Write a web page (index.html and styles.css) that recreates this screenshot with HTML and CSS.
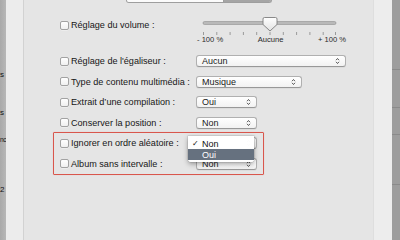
FILE: index.html
```html
<!DOCTYPE html>
<html lang="fr">
<head>
<meta charset="utf-8">
<title>Options</title>
<link rel="stylesheet" href="styles.css">
</head>
<body>
<div class="screen">
  <div class="side-left">
    <div class="frag f1">s</div>
    <div class="frag f2">s</div>
    <div class="frag f3">nc</div>
    <div class="frag f4">2</div>
  </div>
  <div class="gutter-left"></div>
  <div class="panel">
    <div class="tabs"><div class="tab on"></div><div class="tab"></div></div>

    <div class="volume">
      <label class="opt"><span class="cb"></span>Réglage du volume :</label>
      <div class="slider">
        <svg class="slider-svg" width="150" height="21" viewBox="0 0 150 21">
          <defs>
            <linearGradient id="kg" x1="0" y1="0" x2="0" y2="1">
              <stop offset="0" stop-color="#ffffff"/>
              <stop offset="1" stop-color="#e2e2e2"/>
            </linearGradient>
          </defs>
          <rect x="7" y="6.5" width="133" height="3" rx="1.5" fill="#b9b9b9" stroke="#8f8f8f" stroke-width="0.6"/>
          <g stroke="#9a9a9a" stroke-width="1">
            <line x1="7.5" y1="17" x2="7.5" y2="20"/>
            <line x1="20.8" y1="17" x2="20.8" y2="20"/>
            <line x1="34.1" y1="17" x2="34.1" y2="20"/>
            <line x1="47.4" y1="17" x2="47.4" y2="20"/>
            <line x1="60.7" y1="17" x2="60.7" y2="20"/>
            <line x1="74" y1="17" x2="74" y2="20"/>
            <line x1="87.3" y1="17" x2="87.3" y2="20"/>
            <line x1="100.6" y1="17" x2="100.6" y2="20"/>
            <line x1="113.9" y1="17" x2="113.9" y2="20"/>
            <line x1="127.2" y1="17" x2="127.2" y2="20"/>
            <line x1="139.5" y1="17" x2="139.5" y2="20"/>
          </g>
          <path d="M68.5 2.5 h11 a1.5 1.5 0 0 1 1.5 1.5 v5.5 l-7 6.5 l-7 -6.5 v-5.5 a1.5 1.5 0 0 1 1.5 -1.5 z" fill="url(#kg)" stroke="#7d7d7d" stroke-width="0.9"/>
        </svg>
        <div class="scale"><span>- 100 %</span><span>Aucune</span><span>+ 100 %</span></div>
      </div>
    </div>

    <div class="row">
      <label class="opt"><span class="cb"></span>Réglage de l'égaliseur :</label>
      <div class="popup w-xl">Aucun<svg class="arr" width="5" height="8" viewBox="0 0 5 8"><path d="M1 3.2 L2.5 1.5 L4 3.2 M1 4.8 L2.5 6.5 L4 4.8" fill="none" stroke="#444" stroke-width="0.9"/></svg></div>
    </div>
    <div class="row">
      <label class="opt"><span class="cb"></span>Type de contenu multimédia :</label>
      <div class="popup w-l">Musique<svg class="arr" width="5" height="8" viewBox="0 0 5 8"><path d="M1 3.2 L2.5 1.5 L4 3.2 M1 4.8 L2.5 6.5 L4 4.8" fill="none" stroke="#444" stroke-width="0.9"/></svg></div>
    </div>
    <div class="row">
      <label class="opt"><span class="cb"></span>Extrait d’une compilation :</label>
      <div class="popup w-s">Oui<svg class="arr" width="5" height="8" viewBox="0 0 5 8"><path d="M1 3.2 L2.5 1.5 L4 3.2 M1 4.8 L2.5 6.5 L4 4.8" fill="none" stroke="#444" stroke-width="0.9"/></svg></div>
    </div>
    <div class="row">
      <label class="opt"><span class="cb"></span>Conserver la position :</label>
      <div class="popup w-s">Non<svg class="arr" width="5" height="8" viewBox="0 0 5 8"><path d="M1 3.2 L2.5 1.5 L4 3.2 M1 4.8 L2.5 6.5 L4 4.8" fill="none" stroke="#444" stroke-width="0.9"/></svg></div>
    </div>

    <div class="group">
      <div class="row">
        <label class="opt"><span class="cb"></span>Ignorer en ordre aléatoire :</label>
        <div class="popup w-s">Non<svg class="arr" width="5" height="8" viewBox="0 0 5 8"><path d="M1 3.2 L2.5 1.5 L4 3.2 M1 4.8 L2.5 6.5 L4 4.8" fill="none" stroke="#444" stroke-width="0.9"/></svg>
          <div class="menu">
            <div class="item"><span class="check">✓</span>Non</div>
            <div class="item sel"><span class="check"></span>Oui</div>
          </div>
        </div>
      </div>
      <div class="row">
        <label class="opt"><span class="cb"></span>Album sans intervalle :</label>
        <div class="popup w-s">Non<svg class="arr" width="5" height="8" viewBox="0 0 5 8"><path d="M1 3.2 L2.5 1.5 L4 3.2 M1 4.8 L2.5 6.5 L4 4.8" fill="none" stroke="#444" stroke-width="0.9"/></svg></div>
      </div>
    </div>
  </div>
  <div class="gutter-right"></div>
  <div class="side-right">
    <div class="band b1"></div>
    <div class="band b2"></div>
    <div class="band b3"></div>
    <div class="band b4"></div>
  </div>
</div>
</body>
</html>
```

FILE: styles.css
```css
* { box-sizing: border-box; }
html, body { margin: 0; padding: 0; }
body {
  width: 400px;
  height: 240px;
  overflow: hidden;
  font-family: "Liberation Sans", Arial, sans-serif;
  color: #1c1c1c;
}
.screen {
  display: flex;
  width: 400px;
  height: 240px;
}
.side-left {
  width: 6px;
  flex: none;
  background: linear-gradient(90deg, #a9a9a9, #b7b7b7);
  display: flex;
  flex-direction: column;
}
.frag {
  white-space: nowrap;
  height: 10px;
  line-height: 10px;
  font-size: 8px;
  color: #111;
}
.f1 { margin-top: 70px; }
.f2 { margin-top: 28px; }
.f3 { margin-top: 17px; font-size: 6.5px; letter-spacing: -0.4px; }
.f4 { margin-top: 40px; }
.gutter-left {
  width: 18px;
  flex: none;
  background: #ececec;
  border-right: 1px solid #d2d2d2;
}
.panel {
  width: 349px;
  flex: none;
  background: #e5e5e5;
  padding-left: 36px;
}
.gutter-right {
  width: 19px;
  flex: none;
  background: #ededed;
  border-left: 1px solid #dedede;
}
.side-right {
  flex: 1;
  background: #9d9d9d;
  display: flex;
  flex-direction: column;
}
.band { border-bottom: 1px solid #8a8a8a; }
.b1 { height: 70px; }
.b2 { height: 38px; }
.b3 { height: 27px; }
.b4 { height: 50px; }

.tabs {
  display: flex;
  height: 3px;
  margin-left: 66px;
  width: 146px;
  border: 1px solid #9e9e9e;
  border-top: none;
  border-radius: 0 0 3px 3px;
  overflow: hidden;
}
.tab { flex: 1; background: #a5a5a5; }
.tab.on { flex: none; width: 97px; background: #fbfbfb; border-right: 1px solid #9e9e9e; }

.opt {
  width: 136px;
  flex: none;
  display: flex;
  align-items: center;
  height: 20px;
  font-size: 9.1px;
  white-space: nowrap;
  color: #161616;
}
.cb {
  width: 9px;
  height: 9px;
  flex: none;
  margin-right: 2px;
  border: 1px solid #a2a2a2;
  border-radius: 2px;
  background: linear-gradient(#ffffff, #f0f0f0);
  box-shadow: 0 0.5px 0 rgba(255,255,255,0.6);
}

.volume {
  display: flex;
  align-items: flex-start;
  height: 47.75px;
  padding-top: 12px;
}
.slider {
  display: flex;
  flex-direction: column;
}
.slider-svg { display: block; }
.scale {
  display: flex;
  justify-content: space-between;
  width: 149px;
  margin-left: 1px;
  height: 8px;
  line-height: 8px;
  font-size: 7.6px;
  color: #2a2a2a;
  white-space: nowrap;
}

.row {
  display: flex;
  align-items: center;
  height: 20.5px;
}
.popup {
  position: relative;
  display: flex;
  align-items: center;
  justify-content: space-between;
  height: 12px;
  padding: 0 5px 0 5px;
  border: 1px solid #b0b0b0;
  border-bottom-color: #989898;
  border-radius: 3px;
  background: linear-gradient(#ffffff, #f2f2f2);
  box-shadow: 0 1px 0 rgba(0,0,0,0.04);
  font-size: 9px;
  line-height: 10px;
  color: #1a1a1a;
}
.arr { display: block; flex: none; }
.w-xl { width: 150px; }
.w-l { width: 106px; }
.w-s { width: 61px; }

.group { position: relative; }
.group::before {
  content: "";
  position: absolute;
  left: -7px;
  top: -1px;
  bottom: -1px;
  width: 209px;
  border: 1.5px solid #d9564c;
  border-radius: 1px;
  box-shadow: 0 0 1px rgba(217,86,76,0.4);
}

.menu {
  position: absolute;
  left: -9px;
  top: -2px;
  width: 66px;
  padding: 2px 0;
  background: rgba(255,255,255,0.98);
  border-radius: 0 0 3px 3px;
  box-shadow: 0 2px 5px rgba(0,0,0,0.35), 0 0 0 0.5px rgba(0,0,0,0.15);
  z-index: 2;
}
.item {
  display: flex;
  align-items: center;
  height: 11px;
  padding-left: 4px;
  font-size: 9px;
  color: #111;
}
.item.sel {
  background: #66717f;
  color: #ffffff;
}
.check {
  width: 10px;
  flex: none;
  font-family: "DejaVu Sans", sans-serif;
  font-size: 8px;
}
```
